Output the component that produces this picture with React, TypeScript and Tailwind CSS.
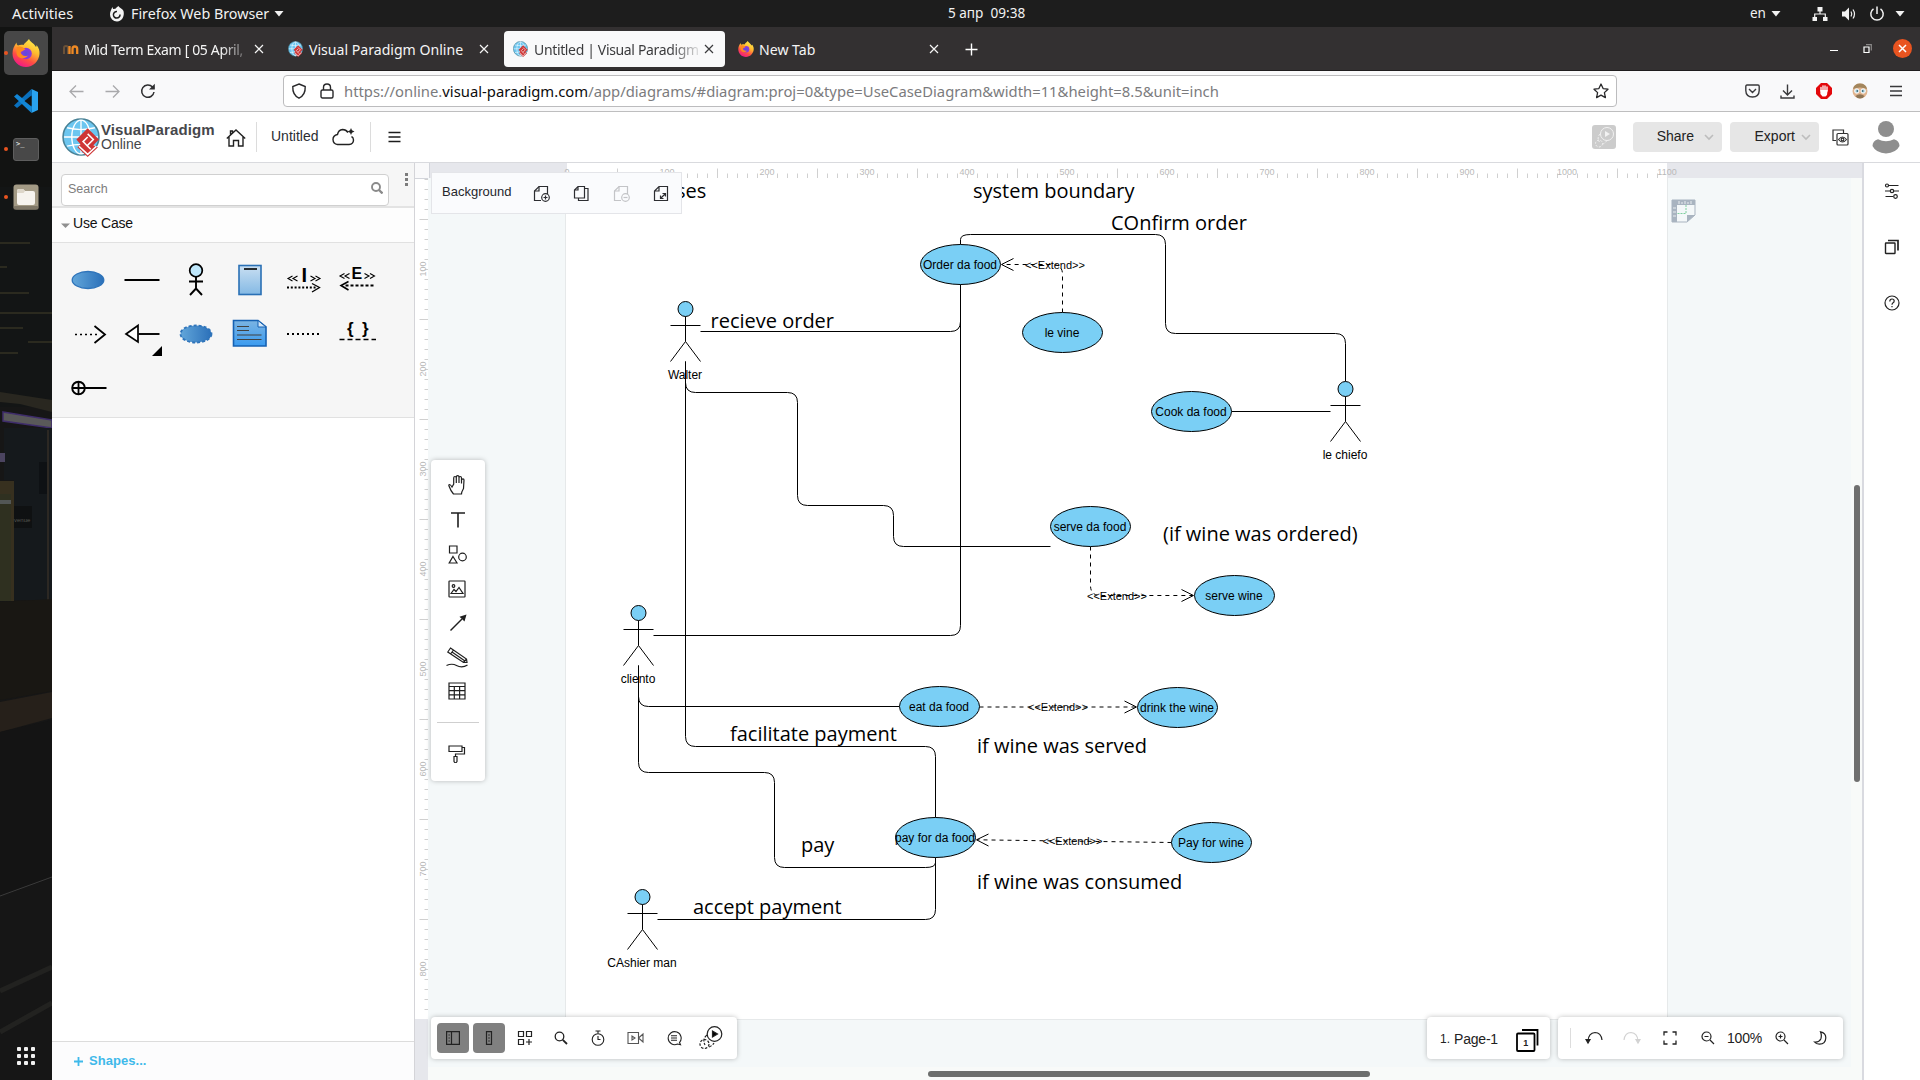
import React from "react";

const UI = "font-['Noto_Sans',sans-serif]";
const ARIAL = "font-['Liberation_Sans',sans-serif]";

type IconProps = { w?: number; h?: number; sw?: number; className?: string; children: React.ReactNode };

function Icon({ w = 20, h, sw = 1.2, className = "", children }: IconProps) {
  const hh = h ?? w;
  return (
    <svg
      width={w}
      height={hh}
      viewBox={`0 0 ${w} ${hh}`}
      fill="none"
      stroke="currentColor"
      strokeWidth={sw}
      className={`block shrink-0 ${className}`}
    >
      {children}
    </svg>
  );
}

function Firefox({ size }: { size: number }) {
  const id = `fx${size}`;
  return (
    <svg width={size} height={size} viewBox="0 0 28 28" className="block shrink-0">
      <defs>
        <linearGradient id={id} x1="0.8" y1="0" x2="0.3" y2="1">
          <stop offset="0" stopColor="#fff44f" />
          <stop offset="0.4" stopColor="#ffb92e" />
          <stop offset="0.7" stopColor="#ff4f43" />
          <stop offset="1" stopColor="#f0148c" />
        </linearGradient>
        <radialGradient id={`${id}p`}>
          <stop offset="0" stopColor="#5a4be0" />
          <stop offset="1" stopColor="#9438d8" />
        </radialGradient>
      </defs>
      <path
        d="M17 0C18 3 22 4 24 8C24.6 7.500 24.500 6.500 24.500 6C27 9 27.800 12 27.500 15C27 22 21 28 14 28C6.500 28 0.500 22 0.500 14.500C0.500 10.500 2 7 4.500 3.500C4.500 5 5 6 6 6.500C8 5.600 10 5.600 11.500 6C12.500 4 15 2.500 17 0Z"
        fill={`url(#${id})`}
      />
      <circle cx="14" cy="14.500" r="5.800" fill={`url(#${id}p)`} />
      <path d="M4.500 8C8 6.500 11 8 13.500 10.500C11.500 11 10.500 12.500 8.500 13C9 16 12 18 16 16.500C13 21 5 20 4.500 14Z" fill="#ff8a1e" />
    </svg>
  );
}

function ParadigmLogo({ w, h }: { w: number; h: number }) {
  return (
    <svg width={w} height={h} viewBox="0 0 37 38" preserveAspectRatio="none" className="block shrink-0">
      <circle cx="18.500" cy="18.500" r="17.500" fill="#6cc6f0" stroke="#4a8296" strokeWidth="1.500" />
      <g fill="none" stroke="#fff" strokeWidth="1.300">
        <ellipse cx="18.500" cy="18.500" rx="9" ry="16.500" />
        <path d="M18.500 2V35M2 18.500H35M5 9.500Q18.500 13 32 9.500M5 27.500Q18.500 24 32 27.500" />
      </g>
      <path d="M25 10L36 21L30.500 26.500L35 28.500L25 38L15 28.500L18 25.500L14 21Z" fill="#cf3535" />
      <path d="M25 15.500L30.500 21L24.500 27L28 30.500M24.500 27L20.500 23L25 18.500M16.500 27.500L25 35.500L33.500 27.500" fill="none" stroke="#fff" strokeWidth="1.500" />
    </svg>
  );
}

const Caret = ({ className = "" }: { className?: string }) => (
  <svg width="10" height="6" viewBox="0 0 10 6" className={`block ${className}`}>
    <path d="M0.500 0H9.500L5 5.500Z" fill="#f2f2f2" />
  </svg>
);

function TopBar() {
  return (
    <header className={`flex h-[27px] w-full items-center bg-[#1d1d1d] text-[14px] text-[#f2f2f2] ${UI}`}>
      <span className="ml-3 w-[97px] text-[14.700px]">Activities</span>
      <svg width="16" height="16" viewBox="0 0 16 16" className="mr-1.5 block">
        <path d="M8 15.500A7 7 0 0 1 1 8.500C1 5.500 2.500 3 3.500 1L4 3L6.500 2.800C7 1.800 8 1 9.500 0C10.500 2 13 2 14.500 5C15.800 10 13 15.500 8 15.500Z" fill="#f4f4f4" />
        <path d="M8 5.500A3.300 3.300 0 1 0 11 8.500" stroke="#1d1d1d" strokeWidth="1.500" fill="none" />
      </svg>
      <span className="w-[143px] whitespace-nowrap text-[14.300px]">Firefox Web Browser</span>
      <Caret />
      <span className="ml-[664px] w-[100px] whitespace-pre text-[13.600px]">5 апр  09:38</span>
      <span className="ml-[702px] w-[22px] text-[13.500px]">en</span>
      <Caret className="-ml-px" />
      <Icon w={16} className="ml-[31px]">
        <path d="M5.500 1H10.500V5.500H5.500ZM0.500 11H5V15H0.500ZM11 11H15.500V15H11Z" fill="#f2f2f2" stroke="none" />
        <path d="M8 5V8M2.700 11V8H13.300V11" />
      </Icon>
      <Icon w={16} className="ml-[13px]">
        <path d="M1 5.500H4L8 1.500V14.500L4 10.500H1Z" fill="#f2f2f2" stroke="none" />
        <path d="M10 5.500Q11.500 8 10 10.500M12 3.500Q15 8 12 12.500" />
      </Icon>
      <Icon w={16} sw={1.5} className="ml-3">
        <path d="M4.500 2.800A6.200 6.200 0 1 0 11.500 2.800M8 0.500V8" />
      </Icon>
      <Caret className="ml-[10px]" />
    </header>
  );
}

function DockSlot({ dot, children, tile }: { dot?: boolean; tile?: boolean; children: React.ReactNode }) {
  return (
    <div className="relative flex h-12 w-full items-center justify-center">
      {tile && <div className="absolute inset-x-1 inset-y-0.5 rounded-[5px] bg-[#474747]" />}
      {dot && <div className="absolute left-1 h-1 w-1 rounded-full bg-[#e95420]" />}
      <div className="relative">{children}</div>
    </div>
  );
}

function Dock() {
  return (
    <aside className="relative flex h-full w-[52px] shrink-0 flex-col overflow-hidden bg-[#161616] pt-0.5">
      <svg width="52" height="1053" viewBox="0 27 52 1053" className="absolute left-0 top-0 block">
        <rect y="27" width="52" height="160" fill="#121312" />
        <rect y="187" width="52" height="220" fill="#131515" />
        <g stroke="#343223" strokeWidth="1.500">
          <path d="M0 243H30M0 267H7M0 293H29M0 313H52M0 328H23M28 342H52M0 353H18" />
        </g>
        <path d="M0 392L52 400V412L20 404L0 402Z" fill="#292720" />
        <path d="M3 412L52 420V428L3 421Z" fill="#595959" stroke="#3f2d6b" strokeWidth="1.500" />
        <path d="M4 428H52V600H14V480H4Z" fill="#15191c" />
        <path d="M48 430V600" stroke="#2c2823" strokeWidth="2" />
        <path d="M0 453H5V462H0Z" fill="#4b4460" />
        <path d="M0 481H14V601H0Z" fill="#37301f" />
        <path d="M0 494H11V601H0Z" fill="#2f3020" />
        <path d="M0 500H11V504H0Z" fill="#525655" />
        <path d="M39 462H47V494H39Z" fill="#0e1114" />
        <path d="M14 506H32V528H14Z" fill="#0f1112" />
        <path d="M0 602L52 599V691L0 700Z" fill="#191713" />
        <path d="M0 702L52 692V718L0 732Z" fill="#26201a" />
        <path d="M0 732L52 720V878L0 896Z" fill="#141414" />
        <path d="M0 896L52 877" stroke="#3b3b3b" />
        <path d="M0 991L52 967M0 1032L52 1003" stroke="#222220" strokeWidth="5" />
      </svg>
      <span className={`absolute left-[14px] top-[489px] text-[6px] leading-[8px] text-[#55554f] ${ARIAL}`}>venue</span>
      <DockSlot dot tile>
        <Firefox size={28} />
      </DockSlot>
      <DockSlot>
        <svg width="26" height="26" viewBox="0 0 26 26" className="block">
          <path d="M18.500 1L25 4V22L18.500 25Z" fill="#29a3f0" />
          <path d="M18.500 1L19 8L4 20L1 17.500Z" fill="#0a70bd" />
          <path d="M18.500 25L19 18L4 6L1 8.500Z" fill="#1286d6" />
          <path d="M18.500 7.500V18.500L11.500 13Z" fill="#121312" />
        </svg>
      </DockSlot>
      <DockSlot dot>
        <div className="h-[23px] w-[26px] rounded-[3px] border border-[#5e5e5e] bg-[#484848] pl-0.5 font-['DejaVu_Sans_Mono',monospace] text-[7px] leading-[11px] text-white">
          &gt;_
        </div>
      </DockSlot>
      <DockSlot dot>
        <svg width="26" height="26" viewBox="0 0 26 26" className="block">
          <rect x="0.500" y="0.500" width="25" height="25" rx="3" fill="#a39a85" />
          <rect x="0.500" y="22" width="25" height="3.500" rx="1.500" fill="#7f7767" />
          <path d="M4 7Q4 5 6 5H10L12 7H20Q22 7 22 9V19Q22 21 20 21H6Q4 21 4 19Z" fill="#f6f3ee" />
          <path d="M4 7Q4 5 6 5H10L12 7L10.500 9H4Z" fill="#ddd6c9" />
        </svg>
      </DockSlot>
      <div className="relative mb-[15px] ml-[17px] mt-auto grid w-[18px] grid-cols-3 gap-[3px]">
        {Array.from({ length: 9 }, (_, i) => (
          <div key={i} className="h-1 w-1 rounded-[1px] bg-[#f0f0f0]" />
        ))}
      </div>
    </aside>
  );
}

const Cross = ({ className = "" }: { className?: string }) => (
  <Icon w={10} sw={1.2} className={className}>
    <path d="M1 1L9 9M9 1L1 9" />
  </Icon>
);

function Tab({ icon, title, active, fade }: { icon: React.ReactNode; title: string; active?: boolean; fade?: boolean }) {
  return (
    <div
      className={`mr-1 flex h-9 w-[221px] items-center rounded-[4px] pl-[9px] pr-[11px] ${
        active ? "bg-[#f9f9fa] text-[#3b3b3d]" : "text-[#f5f5f5]"
      }`}
    >
      <div className="flex w-[21px] shrink-0">{icon}</div>
      <span
        className={`w-[172px] whitespace-nowrap pt-0.5 ${
          fade
            ? "text-[14px] tracking-[-0.35px] [mask-image:linear-gradient(to_right,black_80%,transparent_99%)]"
            : "text-[14.100px]"
        }`}
      >
        {title}
      </span>
      <Cross className="-ml-px" />
    </div>
  );
}

function TabBar() {
  return (
    <div className={`flex h-11 items-center border-b border-[#1f1d1e] bg-[#333031] pl-[2px] ${UI}`}>
      <Tab
        fade
        title="Mid Term Exam [ 05 April,"
        icon={
          <svg width="17" height="12" viewBox="0 0 17 12" className="-ml-px block">
            <path d="M2 11V5Q2 3 4 3Q6 3 6 5V11" fill="none" stroke="#6b5138" strokeWidth="2" />
            <path d="M7.500 11V3M10.500 11V6Q10.500 3.500 12.800 3.500Q15.200 3.500 15.200 6V11" fill="none" stroke="#f08a24" strokeWidth="2.300" />
          </svg>
        }
      />
      <Tab title="Visual Paradigm Online" icon={<ParadigmLogo w={15} h={16} />} />
      <Tab active fade title="Untitled | Visual Paradigm" icon={<ParadigmLogo w={15} h={16} />} />
      <Tab title="New Tab" icon={<Firefox size={16} />} />
      <Icon w={13} sw={1.4} className="ml-[11px] mt-px text-white">
        <path d="M6.500 0.500V12.500M0.500 6.500H12.500" />
      </Icon>
      <div className="ml-auto flex items-center pr-2 text-white">
        <div className="mt-[3px] h-px w-2 bg-white" />
        <Icon w={9} sw={1.2} className="ml-[25px]">
          <path d="M1 3H6V8.500H1Z" />
          <path d="M3 0.700H8.300V6.500" stroke="#8a8888" />
        </Icon>
        <div className="ml-[21px] flex h-[19px] w-[19px] items-center justify-center rounded-full bg-[#e95420]">
          <Icon w={9} sw={1.5}>
            <path d="M1 1L8 8M8 1L1 8" />
          </Icon>
        </div>
      </div>
    </div>
  );
}

function NavBar() {
  return (
    <div className={`flex h-[41px] items-center border-b border-[#bebebf] bg-[#f9f9fa] ${UI}`}>
      <Icon w={15} sw={1.3} className="ml-[17px] text-[#a9a9ab]">
        <path d="M14.500 7.500H1M7 1.500L1 7.500L7 13.500" />
      </Icon>
      <Icon w={15} sw={1.3} className="ml-[21px] text-[#a9a9ab]">
        <path d="M0.500 7.500H14M8 1.500L14 7.500L8 13.500" />
      </Icon>
      <Icon w={16} sw={1.5} className="ml-5 text-[#2e2e30]">
        <path d="M14 9A6.200 6.200 0 1 1 12.500 4L14 5.500" />
        <path d="M14.800 0.800V6.500H9Z" fill="currentColor" stroke="none" />
      </Icon>
      <div className="ml-[127px] flex h-8 w-[1334px] items-center rounded-[4px] border border-[#bcbcbe] bg-white text-[#28282a]">
        <Icon w={16} sw={1.4} className="ml-[7px]">
          <path d="M8 1L14.200 3.500C14.500 9 12.500 13 8 15.200C3.500 13 1.500 9 1.800 3.500Z" />
        </Icon>
        <Icon w={14} h={16} sw={1.4} className="ml-[13px]">
          <rect x="1" y="7" width="12" height="8" rx="1.500" />
          <path d="M3.500 7V4.500Q3.500 1 7 1Q10.500 1 10.500 4.500V7" />
        </Icon>
        <span className="ml-[10px] whitespace-nowrap pt-px text-[14.820px] text-[#7b7b7d]">
          https://online.<span className="text-[#0c0c0d]">visual-paradigm.com</span>
          /app/diagrams/#diagram:proj=0&amp;type=UseCaseDiagram&amp;width=11&amp;height=8.5&amp;unit=inch
        </span>
        <Icon w={16} sw={1.3} className="ml-auto mr-[7px]">
          <path d="M8 1L10.100 5.600L15 6.200L11.400 9.600L12.400 14.600L8 12.100L3.600 14.600L4.600 9.600L1 6.200L5.900 5.600Z" strokeLinejoin="round" />
        </Icon>
      </div>
      <div className="ml-auto flex items-center pr-[17px] text-[#39393b]">
        <Icon w={15} h={14} sw={1.4}>
          <path d="M2 1H13Q14.200 1 14.200 2.500V6.500Q14 13 7.500 13Q1 13 0.800 6.500V2.500Q0.800 1 2 1ZM4 5L7.500 8.500L11 5" />
        </Icon>
        <Icon w={15} sw={1.4} className="ml-[20px]">
          <path d="M7.500 0.500V10.500M3 6.500L7.500 11L12 6.500M1 11.500V14H14V11.500" />
        </Icon>
        <svg width="16" height="16" viewBox="0 0 16 16" className="ml-[21px] block">
          <path d="M5 0H11L16 5V11L11 16H5L0 11V5Z" fill="#e3080b" />
          <path d="M5 8V4.500M7 7V2.800M9 7V2.800M11 8V4" stroke="#fff" strokeWidth="1.300" strokeLinecap="round" />
          <path d="M4.400 7H11.600L11 12L9.500 13.500H6.500L4.400 11Z" fill="#fff" />
        </svg>
        <svg width="16" height="16" viewBox="0 0 16 16" className="ml-[20px] block">
          <circle cx="8" cy="8" r="7.500" fill="#e0b48f" />
          <path d="M1 6Q2 0.500 8 0.500Q14 0.500 15 6Q8 3 1 6Z" fill="#a3865c" />
          <path d="M3.500 13Q8 9.500 12.500 13Q11 15.500 8 15.500Q5 15.500 3.500 13Z" fill="#8f7555" />
          <circle cx="4.800" cy="8" r="2.300" fill="#c4dfe8" stroke="#fff" strokeWidth="0.800" />
          <circle cx="11.200" cy="8" r="2.300" fill="#c4dfe8" stroke="#fff" strokeWidth="0.800" />
          <circle cx="5.300" cy="8" r="0.900" fill="#3b6c7c" />
          <circle cx="10.700" cy="8" r="0.900" fill="#3b6c7c" />
        </svg>
        <Icon w={14} h={12} sw={1.3} className="ml-[21px]">
          <path d="M1 1.500H13M1 6H13M1 10.500H13" />
        </Icon>
      </div>
    </div>
  );
}

function HeaderButton({ label }: { label: string }) {
  return (
    <div className="mr-2 flex h-[30px] w-[89px] items-center justify-end rounded-[4px] bg-[#e6e6e6] pr-2 text-[14px] text-[#222]">
      <span className="pb-0.5">{label}</span>
      <Icon w={10} h={7} sw={1.6} className={label === "Share" ? "ml-[10px] text-[#bdbdbd]" : "ml-[6px] text-[#bdbdbd]"}>
        <path d="M1 1L5 5L9 1" />
      </Icon>
    </div>
  );
}

function AppHeader() {
  return (
    <div className={`flex h-[51px] shrink-0 items-center border-b border-[#d9dade] bg-white ${ARIAL}`}>
      <div className="ml-[10px]">
        <ParadigmLogo w={38} h={39} />
      </div>
      <div className="ml-px flex w-[125px] flex-col pb-0.5 text-[#46474b]">
        <span className="text-[15px] font-bold leading-[16px] tracking-[0.1px]">VisualParadigm</span>
        <span className="text-[14px] leading-[13px]">Online</span>
      </div>
      <Icon w={20} h={18} sw={1.4} className="mt-px text-[#222]">
        <path d="M0.800 9.500L10 1L19.200 9.500M3 8V17H7.500V11.500H12.500V17H17V8M4.500 6V2H6.500V4" />
      </Icon>
      <div className="ml-[10px] h-[30px] w-px bg-[#dcdcdc]" />
      <span className="ml-[14px] pb-0.5 text-[14px] text-[#2b2d33]">Untitled</span>
      <Icon w={23} h={18} sw={1.4} className="ml-[14px] text-[#222]">
        <path d="M16 4.500Q14 1.500 10.500 1.500Q6.500 1.800 5.500 6.500Q1 7.500 1 11.500Q1.200 16 5.500 16.500H17Q21.500 16 21.500 12Q21.500 9.500 19.500 8.500" />
        <path d="M19 0L20 2.300L22.500 3.500L20 4.700L19 7L18 4.700L15.500 3.500L18 2.300Z" fill="currentColor" stroke="none" />
      </Icon>
      <div className="ml-[15px] h-[30px] w-px bg-[#dcdcdc]" />
      <Icon w={13} h={12} sw={1.5} className="ml-[17px] text-[#1c1c1c]">
        <path d="M0.500 1.500H12.500M0.500 6H12.500M0.500 10.500H12.500" />
      </Icon>
      <div className="ml-auto flex items-center">
        <div className="mr-[17px] flex h-6 w-6 items-center justify-center rounded-[3px] bg-[#cccccc]">
          <Icon w={22} sw={1} className="text-[#f2f2f2]">
            <circle cx="14" cy="8" r="6.500" />
            <path d="M7 8Q3.500 12 6.500 16M9.500 18Q12 17.500 13.500 15" strokeDasharray="2 1.500" />
            <circle cx="6" cy="17.500" r="3.500" strokeDasharray="2 1.500" />
            <path d="M12 5V11L17 8Z" fill="currentColor" stroke="none" />
          </Icon>
        </div>
        <HeaderButton label="Share" />
        <HeaderButton label="Export" />
        <Icon w={17} h={17} sw={1.2} className="ml-[5px] text-[#333]">
          <path d="M4 11.500H1V1H11.500V4" />
          <rect x="5" y="4.500" width="11" height="11.500" rx="1" />
          <path d="M6.500 10.500Q10.500 5.500 14.500 10.500Q10.500 15.500 6.500 10.500Z" />
          <circle cx="10.500" cy="10.500" r="1.300" />
        </Icon>
        <svg width="28" height="33" viewBox="0 0 28 33" className="ml-[23px] mr-[20px] block">
          <ellipse cx="14" cy="8" rx="8" ry="8" fill="#8e8e8e" />
          <path d="M6 18.300Q14 22 22 18.300Q27.500 20 27.500 25Q24 32 14 32.500Q4 32 0.500 25Q0.500 20 6 18.300Z" fill="#8e8e8e" />
        </svg>
      </div>
    </div>
  );
}

const Box = ({ children }: { children: React.ReactNode }) => (
  <svg width="54" height="54" viewBox="-27 -27 54 54" fill="none" stroke="#000" className="block">
    {children}
  </svg>
);

function Palette() {
  return (
    <div className={`grid grid-cols-[repeat(6,54px)] ${ARIAL}`}>
      <Box>
        <defs>
          <linearGradient id="el">
            <stop offset="0" stopColor="#62a6da" />
            <stop offset="1" stopColor="#2b70b9" />
          </linearGradient>
        </defs>
        <ellipse rx="15.800" ry="8.500" fill="url(#el)" stroke="#2f74ba" strokeWidth="1.300" />
      </Box>
      <Box>
        <path d="M-17.500 0H17.500" strokeWidth="1.800" />
      </Box>
      <Box>
        <circle cy="-9.500" r="6.300" fill="#bfe7fb" strokeWidth="1.700" />
        <path d="M0 -3V8.500M-7 1.500H7M-6 15L0 8.500L6 15" strokeWidth="1.900" />
      </Box>
      <Box>
        <defs>
          <linearGradient id="rc" x1="0" y1="0" x2="0" y2="1">
            <stop offset="0" stopColor="#c9dff2" />
            <stop offset="1" stopColor="#84b9e4" />
          </linearGradient>
        </defs>
        <rect x="-11" y="-14.500" width="22" height="29" fill="url(#rc)" stroke="#2a70b5" strokeWidth="1.600" />
        <path d="M-6 -11H7" strokeWidth="1.600" />
      </Box>
      <Box>
        <path d="M-11.500 -4L-16 -1.500L-11.500 1M-6.500 -4L-11 -1.500L-6.500 1M6.500 -4L11 -1.500L6.500 1M11.500 -4L16 -1.500L11.500 1" strokeWidth="1.100" />
        <text x="-2.500" y="2" fontSize="20" fontWeight="bold" fill="#000" stroke="none">I</text>
        <path d="M-17 7.500H12" strokeWidth="1.800" strokeDasharray="2 1.800" />
        <path d="M8 3.500L15.500 7.500L8 12" strokeWidth="1.300" />
      </Box>
      <Box>
        <path d="M-13.500 -6.500L-18 -4L-13.500 -1.500M-8.500 -6.500L-13 -4L-8.500 -1.500M6.500 -6.500L11 -4L6.500 -1.500M12 -6.500L16.500 -4L12 -1.500" strokeWidth="1.100" />
        <text x="-6.500" y="-1" fontSize="16" fontWeight="bold" fill="#000" stroke="none">E</text>
        <path d="M15.500 5.500H-14" strokeWidth="1.800" strokeDasharray="3 2" />
        <path d="M-9.500 1.500L-17 5.500L-9.500 10" strokeWidth="1.600" />
      </Box>

      <Box>
        <path d="M-13 0.500H10" strokeWidth="1.600" strokeDasharray="2 3" />
        <path d="M6.500 -8L17 0.500L6.500 9" strokeWidth="1.800" />
      </Box>
      <Box>
        <path d="M-3.500 0H17.500" strokeWidth="1.900" />
        <path d="M-4 -8.500L-16 0L-4 8Z" fill="#fff" strokeWidth="1.700" />
        <path d="M20 12V22H10Z" fill="#000" stroke="none" />
      </Box>
      <Box>
        <ellipse rx="15.500" ry="8.500" fill="url(#el)" stroke="#2f74ba" strokeWidth="1.800" strokeDasharray="3 2" />
      </Box>
      <Box>
        <defs>
          <linearGradient id="nt" x1="0" y1="0" x2="0" y2="1">
            <stop offset="0" stopColor="#7cb4e2" />
            <stop offset="1" stopColor="#3a9bf0" />
          </linearGradient>
        </defs>
        <path d="M-16.500 -13.500H8L16 -7V12H-16.500Z" fill="url(#nt)" stroke="#1661b2" strokeWidth="1.600" />
        <path d="M8 -13.500V-7H16Z" fill="#d3e7f8" stroke="#1661b2" />
        <path d="M-13 -7.500H-1M-13 -3.500H-1M-13 1H11.500M-13 5.500H11.500" stroke="#414141" strokeWidth="1.200" />
      </Box>
      <Box>
        <path d="M-17 0H16" strokeWidth="1.800" strokeDasharray="2 3" />
      </Box>
      <Box>
        <text x="-11" y="0" fontSize="17" fontWeight="bold" fill="#000" stroke="none">{"{"}</text>
        <text x="4" y="0" fontSize="17" fontWeight="bold" fill="#000" stroke="none">{"}"}</text>
        <path d="M-18.500 5.500H18" strokeWidth="1.700" strokeDasharray="5 3" />
      </Box>

      <Box>
        <circle cx="-9.500" cy="0" r="6.300" strokeWidth="1.900" />
        <path d="M-16 0H18.500M-9.500 -6V6" strokeWidth="1.800" />
      </Box>
    </div>
  );
}

function Sidebar() {
  return (
    <div className={`flex w-[363px] shrink-0 flex-col border-r border-[#d4d4d8] bg-white ${ARIAL}`}>
      <div className="flex h-[45px] items-start border-b-2 border-[#e3e3e3] bg-[#f6f6f6] pl-[9px] pt-[11px]">
        <div className="flex h-8 w-[328px] items-center justify-between rounded-[4px] border border-[#d0d0d0] bg-white pl-1.5 pr-[5px]">
          <span className="pb-0.5 text-[12.500px] text-[#7d7d7d]">Search</span>
          <Icon w={12} sw={1.9} className="mb-1 text-[#8a8a8a]">
            <circle cx="5" cy="5" r="4" />
            <path d="M8 8L11.500 11.500" strokeWidth="2.300" />
          </Icon>
        </div>
        <div className="-mt-px ml-4 flex flex-col gap-[2px]">
          <div className="h-[3px] w-[3px] bg-[#7c7c7c]" />
          <div className="h-[3px] w-[3px] bg-[#7c7c7c]" />
          <div className="h-[3px] w-[3px] bg-[#7c7c7c]" />
        </div>
      </div>
      <div className="flex h-[35px] items-center border-b border-[#e1e1e1] bg-[#fdfdfd] pl-[9px] text-[14px] text-[#111]">
        <svg width="9" height="5" viewBox="0 0 9 5" className="mr-[3px] block">
          <path d="M0 0.500H9L4.500 5Z" fill="#909090" />
        </svg>
        <span className="pb-[3px] tracking-[-0.2px]">Use Case</span>
      </div>
      <div className="h-[175px] border-b border-[#e1e1e1] bg-[#f6f6f6] pl-[9px] pt-[10px]">
        <Palette />
      </div>
      <div className="flex-1 bg-white" />
      <div className="flex h-[39px] items-center gap-[6px] border-t border-[#dcdcdc] bg-[#fcfcfd] pl-[22px] text-[13px] font-bold text-[#3fb9ea]">
        <Icon w={9} sw={1.8}>
          <path d="M4.500 0V9M0 4.500H9" />
        </Icon>
        <span className="tracking-[0.05px]">Shapes...</span>
      </div>
    </div>
  );
}

type Pt = [number, number];

/** Builds an orthogonal connector path with corners rounded by up to 10px. */
function rounded(points: Pt[]): string {
  let d = `M${points[0][0]} ${points[0][1]}`;
  for (let i = 1; i < points.length - 1; i++) {
    const [ax, ay] = points[i - 1];
    const [bx, by] = points[i];
    const [cx, cy] = points[i + 1];
    const l1 = Math.hypot(bx - ax, by - ay);
    const l2 = Math.hypot(cx - bx, cy - by);
    const r1 = Math.min(10, l1 / 2);
    const r2 = Math.min(10, l2 / 2);
    d += `L${bx + ((ax - bx) / l1) * r1} ${by + ((ay - by) / l1) * r1}`;
    d += `Q${bx} ${by} ${bx + ((cx - bx) / l2) * r2} ${by + ((cy - by) / l2) * r2}`;
  }
  const last = points[points.length - 1];
  return `${d}L${last[0]} ${last[1]}`;
}

const LINKS: Pt[][] = [
  [[960.5, 244.5], [960.5, 234.5], [1165.5, 234.5], [1165.5, 333.5], [1345.5, 333.5], [1345.5, 381.5]],
  [[700.5, 331.5], [960.5, 331.5], [960.5, 284.5]],
  [[653.5, 635.5], [960.5, 635.5], [960.5, 284.5]],
  [[685.5, 361.5], [685.5, 392.5], [797.5, 392.5], [797.5, 505.5], [893.5, 505.5], [893.5, 546.5], [1050.5, 546.5]],
  [[685.5, 361.5], [685.5, 746.5], [935.5, 746.5], [935.5, 817.5]],
  [[638.5, 665.5], [638.5, 706.5], [899.5, 706.5]],
  [[638.5, 665.5], [638.5, 772.5], [774.5, 772.5], [774.5, 867.5], [935.5, 867.5], [935.5, 857.5]],
  [[657.5, 919.5], [935.5, 919.5], [935.5, 857.5]],
  [[1231.5, 411.5], [1330.5, 411.5]],
];

const EXTENDS: { pts: Pt[]; head: string; label: Pt }[] = [
  { pts: [[1062.5, 312.5], [1062.5, 264.5], [1002, 264.5]], head: "M1013.500 258.500L1001.500 264.500L1013.500 270.500", label: [1055, 269] },
  { pts: [[1090.5, 546.5], [1090.5, 595.5], [1193, 595.5]], head: "M1181.500 589.500L1193.500 595.500L1181.500 601.500", label: [1117, 600] },
  { pts: [[979.5, 707], [1136, 707]], head: "M1124.500 701L1136.500 707L1124.500 713", label: [1058, 711] },
  { pts: [[1171.5, 842.5], [977, 839.8]], head: "M988.500 834L976.500 839.800L988.500 846", label: [1072.5, 845] },
];

const CASES: [number, number, string][] = [
  [960.5, 264.5, "Order da food"],
  [1062.5, 332.5, "le vine"],
  [1191.5, 411.5, "Cook da food"],
  [1090.5, 526.5, "serve da food"],
  [1234.5, 595.5, "serve wine"],
  [939.5, 706.5, "eat da food"],
  [1177.5, 707.5, "drink the wine"],
  [935.5, 837.5, "pay for da food"],
  [1211.5, 842.5, "Pay for wine"],
];

const ACTORS: [number, number, string][] = [
  [685.5, 301.5, "Walter"],
  [1345.5, 381.5, "le chiefo"],
  [638.5, 605.5, "cliento"],
  [642.5, 889.5, "CAshier man"],
];

const NOTES: [number, number, string][] = [
  [676, 198, "ses"],
  [973, 198, "system boundary"],
  [1111, 230, "COnfirm order"],
  [710.5, 328, "recieve order"],
  [1163, 541, "(if wine was ordered)"],
  [977, 753, "if wine was served"],
  [730, 741, "facilitate payment"],
  [801, 852, "pay"],
  [977, 889, "if wine was consumed"],
  [693, 914, "accept payment"],
];

function Diagram() {
  const xTicks = Array.from({ length: 110 }, (_, i) => i * 10);
  const yTicks = Array.from({ length: 85 }, (_, i) => i * 10);
  return (
    <svg width="1447" height="917" viewBox="415 163 1447 917" className={`absolute left-0 top-0 block ${ARIAL}`}>
      <rect x="415" y="163" width="1447" height="917" fill="#f8faf9" />
      <rect x="428" y="178" width="1423" height="889" fill="#f4f8f9" />
      <rect x="565.500" y="169.500" width="1102" height="850" fill="#fff" stroke="#e6e9ea" />

      <rect x="429" y="163" width="1433" height="15" fill="#e6e7ec" />
      <rect x="567" y="163" width="1100" height="15" fill="#fff" />
      <rect x="415" y="178" width="13" height="841" fill="#fff" />
      <rect x="415" y="1019" width="13" height="61" fill="#e6e7ec" />
      <rect x="415" y="163" width="14" height="15" fill="#f9f9fa" />
      <path d="M415 178.500H428M429.500 163V178" stroke="#d3d5db" />
      <g stroke="#d0d0d0">
        {xTicks.map((t) => (
          <path key={t} d={`M${567.5 + t} 178V${t % 100 === 50 ? 168.5 : 173.5}`} />
        ))}
        {yTicks.slice(1).map((t) => (
          <path key={t} d={`M428 ${169.5 + t}H${t % 100 === 50 ? 419.5 : 424.5}`} />
        ))}
      </g>
      <g fontSize="9" fill="#b9b9b9" textAnchor="middle">
        {Array.from({ length: 12 }, (_, i) => (
          <g key={i}>
            {i > 0 && i < 11 && <rect x={659.5 + (i - 1) * 100} y="167" width="16" height="8" fill="#fff" />}
            <text x={567 + i * 100} y="175">{i * 100}</text>
          </g>
        ))}
        {Array.from({ length: 8 }, (_, i) => (
          <text key={i} transform={`translate(426 ${269 + i * 100}) rotate(-90)`}>{(i + 1) * 100}</text>
        ))}
      </g>

      <g fill="none" stroke="#000">
        {LINKS.map((pts, i) => (
          <path key={i} d={rounded(pts)} />
        ))}
        {EXTENDS.map((e, i) => (
          <g key={i}>
            <path d={rounded(e.pts)} strokeDasharray="4 4" />
            <path d={e.head} />
          </g>
        ))}
      </g>
      <g fontSize="11" textAnchor="middle">
        {EXTENDS.map((e, i) => (
          <text key={i} x={e.label[0]} y={e.label[1]}>&lt;&lt;Extend&gt;&gt;</text>
        ))}
      </g>
      <g fontSize="12" textAnchor="middle">
        {CASES.map(([x, y, label]) => (
          <g key={label}>
            <ellipse cx={x} cy={y} rx="40" ry="20" fill="#7acff5" stroke="#000" />
            <text x={x - 0.5} y={y + 4.5}>{label}</text>
          </g>
        ))}
        {ACTORS.map(([x, y, label]) => (
          <g key={label}>
            <circle cx={x} cy={y + 7.5} r="7.500" fill="#7acff5" stroke="#000" />
            <path
              d={`M${x} ${y + 15}V${y + 40}M${x - 15} ${y + 24}H${x + 15}M${x - 15} ${y + 60}L${x} ${y + 40}L${x + 15} ${y + 60}`}
              fill="none"
              stroke="#000"
            />
            <text x={x - 0.5} y={y + 77.5}>{label}</text>
          </g>
        ))}
      </g>
      <g fontSize="20" className="font-['Open_Sans',sans-serif]">
        {NOTES.map(([x, y, label]) => (
          <text key={label} x={x} y={y}>{label}</text>
        ))}
      </g>

      <g>
        <path d="M1672 200H1695V215L1687 222H1672Z" fill="#f4f8f9" stroke="#a9b4c0" />
        <path d="M1672 200H1695V205H1677V222H1672Z" fill="#a9b4c0" />
        <path d="M1695 215L1687 222V215Z" fill="#a9b4c0" />
        <path d="M1679 201V204M1682 202V204M1685 201V204M1688 202V204M1691 201V204M1673 208H1676M1673 212H1676M1673 216H1676" stroke="#e8edf0" />
        <path d="M1686 205V213.500H1677" fill="none" stroke="#7ed19e" strokeDasharray="2 1" />
      </g>

      <rect x="1854" y="485" width="6" height="297" rx="3" fill="#6f6f6f" />
      <rect x="928" y="1071" width="442" height="6" rx="3" fill="#6c6e6d" />
    </svg>
  );
}

const Sheet = ({ children, dim, open }: { children?: React.ReactNode; dim?: boolean; open?: boolean }) => (
  <div className={`flex w-10 justify-center ${dim ? "text-[#c3c4c7]" : "text-[#2c2d31]"}`}>
    <Icon w={17} sw={1.2}>
      <path d={open ? "M8 15.500H1.500V6L6 1.500H14.500V9" : "M6 1.500H14.500V15.500H1.500V6ZM6 1.500V6H1.500"} />
      {open && <path d="M6 1.500V6H1.500" />}
      {children}
    </Icon>
  </div>
);

function BackgroundBar() {
  return (
    <div className={`absolute left-[16px] top-[9px] flex h-[42px] w-[251px] items-center border border-[#e4e5e9] bg-[#fafbfd] pl-[10px] ${ARIAL}`}>
      <span className="w-20 pb-0.5 text-[13px] text-[#26272c]">Background</span>
      <Sheet open>
        <circle cx="12.500" cy="12.500" r="3.800" />
        <path d="M12.500 10.500V14.500M10.500 12.500H14.500" />
      </Sheet>
      <div className="flex w-[41px] justify-center text-[#2c2d31]">
        <Icon w={17} sw={1.2}>
          <path d="M5 1.500H11.500V13H1.500V5ZM5 1.500V5H1.500M12 3.500H15V15.500H5.500V13" />
        </Icon>
      </div>
      <Sheet open dim>
        <circle cx="12.500" cy="12.500" r="3.800" />
        <path d="M10.500 12.500H14.500" />
      </Sheet>
      <Sheet>
        <path d="M7.500 13.500L12.500 8.500M9.500 8.500H12.500V11.500M7.500 10.500V13.500H10.500" />
      </Sheet>
    </div>
  );
}

function ToolBox() {
  return (
    <div className="absolute left-[16px] top-[297px] flex h-[321px] w-[54px] flex-col items-center rounded-[4px] bg-white pr-0.5 pt-[8px] text-[#1f1f1f] shadow-[0_0_5px_rgba(0,0,0,0.25)]">
      <div className="flex h-[34px] items-center">
        <Icon w={20} sw={1.2}>
          <path d="M6.500 19H14.500Q14.500 17 16.500 13.500L17 5Q17 3.800 16 3.800Q15 3.800 14.500 5V8.500V3Q14.500 1.500 13.200 1.500Q12 1.500 12 3V8V2Q12 0.700 10.700 0.700Q9.300 0.700 9.300 2V8V3Q9.300 1.500 8 1.500Q6.700 1.500 6.700 3V9L5 12Q3.500 9.500 2.500 9.500Q1.500 9.700 2 11Q3.500 15.500 6.500 19Z" />
        </Icon>
      </div>
      <div className="flex h-[35px] items-center">
        <Icon w={16} sw={1.6} className="ml-px">
          <path d="M1 1H15M8 1V15.500" />
        </Icon>
      </div>
      <div className="flex h-[35px] items-center">
        <Icon w={19} sw={1.2}>
          <path d="M1.500 1H9V8H1.500ZM5 11.500L9 18H1.200Z" />
          <circle cx="14.500" cy="12" r="3.800" />
        </Icon>
      </div>
      <div className="flex h-[34px] items-center">
        <Icon w={18} sw={1.2}>
          <rect x="1" y="1" width="16" height="16" rx="0.500" />
          <circle cx="5.500" cy="6" r="1.300" />
          <path d="M3 13.500L6 9.500L8 11.500L11 7.500L15 13.500Z" />
        </Icon>
      </div>
      <div className="flex h-[34px] items-center">
        <Icon w={18} sw={1.5} className="ml-0.5">
          <path d="M1.500 16.500L13 5" />
          <path d="M17.500 0.500L15.500 7.500L10.500 2.800Z" fill="currentColor" stroke="none" />
        </Icon>
      </div>
      <div className="flex h-[34px] items-center pt-0.5">
        <Icon w={22} sw={1.2}>
          <path d="M4.500 1L20.500 12L21 15.500L17.500 15.500L1.800 5ZM7.500 3L4.500 7M20.500 12L17.500 15.500M6 5L19 14" />
          <path d="M0.500 18.500Q6 16 10.500 18.500Q16 21.500 21.500 18" />
        </Icon>
      </div>
      <div className="flex h-[34px] items-center">
        <Icon w={18} sw={1.2}>
          <path d="M1 1H17V17H1ZM1 4.500H17M1 8.700H17M1 12.900H17M6.300 4.500V17M11.600 4.500V17" />
        </Icon>
      </div>
      <div className="ml-0.5 mt-[14px] h-px w-[42px] bg-[#cfcfcf]" />
      <Icon w={18} className="mt-[22px]" sw={1.2}>
        <path d="M1 1H14V6.500H1ZM14 2.500H16.500V9H7.500V11.500M6 11.500H9V16.500Q7.500 19 6 16.500Z" />
      </Icon>
    </div>
  );
}

const CHIP = "flex h-[30px] w-8 items-center justify-center rounded-[4px] bg-[#808080] text-[#222]";

function BottomBar() {
  return (
    <div className="absolute left-[16px] top-[854px] flex h-[42px] w-[306px] items-center rounded-[4px] bg-white pl-1.5 text-[#222] shadow-[0_0_5px_rgba(0,0,0,0.25)]">
      <div className={CHIP}>
        <Icon w={14} sw={1.2}>
          <path d="M0.600 0.600H13.400V13.400H0.600ZM5.500 0.600V13.400M2.500 4H3.800M2.500 7H3.800M2.500 10H3.800" />
        </Icon>
      </div>
      <div className={`ml-1 ${CHIP}`}>
        <Icon w={14} sw={1.2}>
          <path d="M4.500 0.600H9.500V13.400H4.500ZM6.200 4H7.800M6.200 7H7.800M6.200 10H7.800" />
        </Icon>
      </div>
      <Icon w={16} sw={1.2} className="ml-3">
        <path d="M1.500 1.500H6.500V6.500H1.500ZM9.500 1.500H14.500V6.500H9.500ZM1.500 9.500H6.500V14.500H1.500ZM12 9V15M9 12H15" />
      </Icon>
      <Icon w={14} sw={1.3} className="ml-[21px]">
        <circle cx="5.500" cy="5.500" r="4.300" />
        <path d="M8.800 8.800L13 13" strokeWidth="1.800" />
      </Icon>
      <Icon w={16} sw={1.1} className="ml-[22px]">
        <circle cx="8" cy="9.500" r="5.800" />
        <path d="M8 6V9.500H10.500M8 1V3.500M5.500 1H10.500" />
      </Icon>
      <Icon w={17} h={14} sw={1.1} className="ml-[21px] text-[#555]">
        <path d="M1 1.500H11.500V12.500H1ZM11.500 7L16 3V11ZM5 5V9L8 7Z" />
      </Icon>
      <Icon w={16} sw={1.1} className="ml-[22px]">
        <path d="M13.500 12.500A6.500 6.500 0 1 0 11.500 14L14.500 14.800ZM5 5.800H11M5 8H11M5 10.200H11" />
      </Icon>
      <Icon w={24} sw={1.2} className="ml-[17px]">
        <circle cx="15.500" cy="8" r="7.300" />
        <path d="M13.500 5V11L18.500 8Z" fill="#000" />
        <path d="M8 9Q3 13 6 19M10 21Q13 20 15 17" strokeDasharray="3 1.500" />
        <circle cx="5.500" cy="18" r="4.500" strokeDasharray="2.500 1.500" />
      </Icon>
    </div>
  );
}

function PageBar() {
  return (
    <div className={`absolute left-[1012px] top-[854px] flex h-[42px] w-[123px] items-center rounded-[4px] bg-white pl-[13px] text-[#222] shadow-[0_0_5px_rgba(0,0,0,0.25)] ${ARIAL}`}>
      <span className="mt-0.5 w-[14px] text-[12px]">1.</span>
      <span className="mt-0.5 w-[62px] text-[14px] tracking-[-0.2px]">Page-1</span>
      <Icon w={23} sw={1.8} className="mt-1 text-black">
        <rect x="1" y="4.500" width="17.500" height="17.500" rx="1" />
        <path d="M6 1H21.500V16.500" />
        <text x="7.200" y="16.500" fontSize="9" fontWeight="bold" fill="#222" stroke="none">1</text>
      </Icon>
    </div>
  );
}

function ZoomBar() {
  return (
    <div className={`absolute left-[1143px] top-[854px] flex h-[42px] w-[285px] items-center rounded-[4px] bg-white pl-3 text-[#222] shadow-[0_0_5px_rgba(0,0,0,0.25)] ${ARIAL}`}>
      <div className="h-5 w-px bg-[#ddd]" />
      <Icon w={18} h={14} sw={1.2} className="ml-[14px]">
        <path d="M3 10Q3.500 2 10 1.500Q16 1.500 17 9" />
        <path d="M1 8.500H5L3 12Z" fill="currentColor" />
      </Icon>
      <Icon w={18} h={14} sw={1.2} className="ml-[20px] text-[#d2d2d2]">
        <path d="M15 10Q14.500 2 8 1.500Q2 1.500 1 9" />
        <path d="M13 8.500H17L15 12Z" fill="currentColor" />
      </Icon>
      <Icon w={14} sw={1.3} className="ml-[22px]">
        <path d="M4.500 1H1V4.500M9.500 1H13V4.500M4.500 13H1V9.500M9.500 13H13V9.500" />
      </Icon>
      <Icon w={14} sw={1.2} className="ml-[24px]">
        <circle cx="5.500" cy="5.500" r="4.500" />
        <path d="M9 9L13 13M3.500 5.500H7.500" />
      </Icon>
      <span className="ml-3 w-[48px] text-[14px] tracking-[-0.2px]">100%</span>
      <Icon w={14} sw={1.2}>
        <circle cx="5.500" cy="5.500" r="4.500" />
        <path d="M9 9L13 13M3.500 5.500H7.500M5.500 3.500V7.500" />
      </Icon>
      <Icon w={14} sw={1.2} className="ml-[24px]">
        <path d="M7.500 0.800Q13 2 12.800 7Q12.500 13 6.500 13.200Q3 13 1.500 11Q6 11.500 7.800 8Q9 4.500 7.500 0.800Z" />
      </Icon>
    </div>
  );
}

function RightPanel() {
  return (
    <div className="flex w-[58px] shrink-0 flex-col items-center gap-[40px] border-l-2 border-[#d9dae0] bg-white pt-[20px] text-[#222]">
      <Icon w={16} sw={1.2}>
        <path d="M4 2.500H14.500M1 8H6M10 8H15M1.500 13.500H9" />
        <circle cx="3" cy="2.500" r="1.500" />
        <circle cx="8" cy="8" r="1.700" />
        <circle cx="11.500" cy="13.500" r="1.800" />
      </Icon>
      <Icon w={16} sw={1.4}>
        <rect x="1.500" y="4" width="9.500" height="10.500" rx="0.500" />
        <path d="M4 1.500H14V11.500" strokeWidth="1.700" />
      </Icon>
      <Icon w={16} sw={1.2}>
        <circle cx="8" cy="8" r="7" />
        <path d="M5.800 6.500Q5.800 4 8 4Q10.200 4 10.200 6Q10.200 7.200 8.800 8Q8 8.500 8 9.800M8 11V12.300" />
      </Icon>
    </div>
  );
}

export default function App() {
  return (
    <div className="flex h-[1080px] w-[1920px] flex-col overflow-hidden bg-white">
      <TopBar />
      <div className="flex min-h-0 flex-1">
        <Dock />
        <div className="flex min-w-0 flex-1 flex-col">
          <TabBar />
          <NavBar />
          <AppHeader />
          <div className="flex min-h-0 flex-1">
            <Sidebar />
            <main className="relative min-w-0 flex-1 overflow-hidden">
              <Diagram />
              <BackgroundBar />
              <ToolBox />
              <BottomBar />
              <PageBar />
              <ZoomBar />
            </main>
            <RightPanel />
          </div>
        </div>
      </div>
    </div>
  );
}
